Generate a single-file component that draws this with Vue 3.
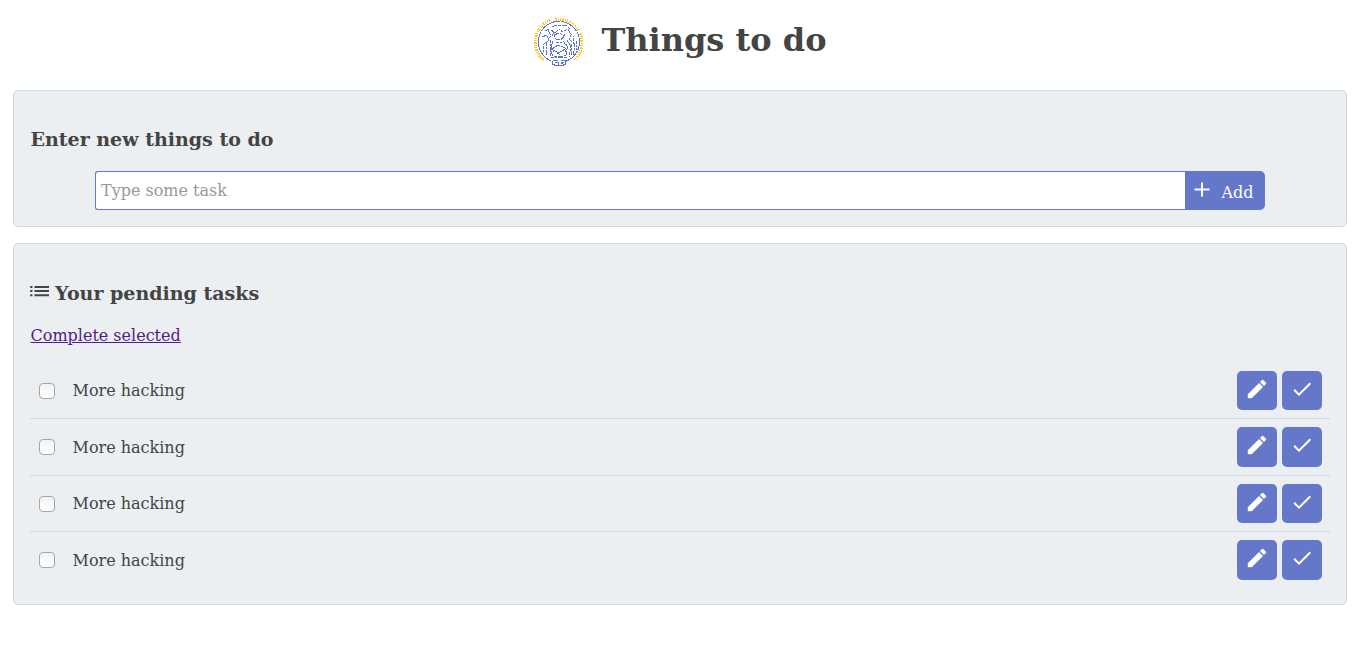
<script setup>
import { ref } from 'vue'

const draft = ref('')
const tasks = ref([
  { id: 1, title: 'More hacking', selected: false },
  { id: 2, title: 'More hacking', selected: false },
  { id: 3, title: 'More hacking', selected: false },
  { id: 4, title: 'More hacking', selected: false },
])

function add() {
  const title = draft.value.trim()
  if (!title) return
  tasks.value.push({ id: Date.now(), title, selected: false })
  draft.value = ''
}
function complete(id) {
  tasks.value = tasks.value.filter((t) => t.id !== id)
}
function completeSelected() {
  tasks.value = tasks.value.filter((t) => !t.selected)
}
</script>

<template>
  <div class="page">
    <header class="header">
      <svg class="logo" viewBox="0 0 50 50" aria-hidden="true" shape-rendering="crispEdges">
        <g fill="none" stroke="#fbc92c">
          <path d="M9.5 43A23.6 23.6 0 0 1 16 3.2" stroke-width="2.8" stroke-dasharray="1.3 1.1 .9 1 1.8 1" />
          <path d="M21.5 2.4A23 23 0 0 1 44.5 13.5" stroke-width="2.8" stroke-dasharray="1.4 1.1 .9 1 1.4 1.2" />
          <path d="M46 16.5A23.3 23.3 0 0 1 40.5 43" stroke-width="2.8" stroke-dasharray="1.4 1 1.6 1 1 1.1" />
        </g>
        <g fill="none" stroke="#5c74c8" stroke-width="1">
          <path d="M17.5 44.1A20.6 20.6 0 1 1 32.3 44.1" stroke-dasharray="6 .4 3 .4" />
          <path stroke-dasharray="3 .8 2 .7" d="M18 10l4-2 5 1 5-1 4 4M17 13l4 3 4-4 4 3 4-3M20 18l5-2 5 3-3 4-5-1zM14 13l3 6-4 5M34 12l3 6-2 4 5 5M8 20l5-2 2 6-5 3-1 8M12 26v12M16 23v17M19 24l-2 6 3 5M33 23l4 7-2 10M39 21l2 9-2 8M37 27v11M42 24v9M29 24l5 6-3 5M18 32l6-4 7 3 2 7-6 2-8-1-2-5zM20 33l6 5M23 37l8-5M22 25h7M17 40h16M20 15l-2 4M31 17l-2 4M11 14l4-2M36 16l4 4" />
          <path d="M18.5 43.5h5M26.5 43.5h5v4h-2v1h-9v-1h-2v-4M21 45.5h3v2M30 45.5h-3v1h2" />
        </g>
      </svg>
      <h1>Things to do</h1>
    </header>

    <section class="panel panel-new">
      <h3>Enter new things to do</h3>
      <form class="entry" @submit.prevent="add">
        <input v-model="draft" type="text" placeholder="Type some task" />
        <button class="btn btn-add" type="submit">
          <svg class="plus" viewBox="0 0 16 16"><path d="M8 .5v14M.5 7.5h15" fill="none" stroke="#fff" stroke-width="2" /></svg>
          <span>Add</span>
        </button>
      </form>
    </section>

    <section class="panel panel-list">
      <h3 class="list-title">
        <svg class="list-icon" viewBox="0 0 19 11">
          <path d="M.2 1h2.2M.2 5h2.2M.2 9.2h2.2M4.5 1h14.5M4.5 5h14.5M4.5 9.2h14.5" fill="none" stroke="#444" stroke-width="2" />
        </svg>
        <span>Your pending tasks</span>
      </h3>
      <a class="complete" href="#" @click.prevent="completeSelected">Complete selected</a>
      <ul class="tasks">
        <li v-for="t in tasks" :key="t.id" class="task">
          <input v-model="t.selected" class="check" type="checkbox" />
          <span class="title">{{ t.title }}</span>
          <button class="btn btn-icon" type="button" aria-label="Edit">
            <svg viewBox="0 0 24 24"><path fill="#fff" stroke="#fff" stroke-width=".4" d="M3 17.25V21h3.75L17.81 9.94l-3.75-3.75L3 17.25zM20.71 7.04a1 1 0 0 0 0-1.41l-2.34-2.34a1 1 0 0 0-1.41 0l-1.73 1.73 3.75 3.75 1.73-1.73z" /></svg>
          </button>
          <button class="btn btn-icon" type="button" aria-label="Complete" @click="complete(t.id)">
            <svg viewBox="0 0 24 24"><path fill="#fff" d="M9 16.17L4.83 12l-1.42 1.41L9 19 21 7l-1.41-1.41z" /></svg>
          </button>
        </li>
      </ul>
    </section>
  </div>
</template>

<style>
body {
  background: #fff;
}
</style>

<style scoped>
.page {
  box-sizing: border-box;
  padding: 17px 14px 0 13px;
  color: #444;
  font-family: "DejaVu Serif", serif;
  font-size: 16px;
  line-height: 19px;
}
.header {
  display: flex;
  justify-content: center;
  height: 73px;
}
.logo {
  width: 50px;
  height: 50px;
  margin: 0 17px 0 1px;
}
h1 {
  margin: 4px 0 0;
  font-size: 32px;
  line-height: 38px;
}
h3 {
  margin: 0;
  font-size: 19px;
  line-height: 22px;
}
.panel {
  box-sizing: border-box;
  padding: 37px 16px 0;
  border: 1px solid #cddae3;
  border-radius: 5px;
  background: #ebeff2;
}
.panel-new {
  height: 137px;
  margin-bottom: 16px;
}
.panel-new h3 {
  padding-left: 0.5px;
}
.panel-list {
  height: 362px;
  padding-top: 38px;
}
.entry {
  display: flex;
  width: 90%;
  height: 39px;
  margin: 21px auto 0;
}
.entry input {
  box-sizing: border-box;
  flex: 1;
  min-width: 0;
  padding: 0 5px;
  border: 1px solid #6577c9;
  border-right: 0;
  border-radius: 3px 0 0 3px;
  outline: 0;
  background: #fff;
  color: #444;
  font: inherit;
}
.entry input::placeholder {
  color: #999;
}
.btn {
  padding: 0;
  border: 0;
  background: #6577c9;
  color: #fff;
  font: inherit;
}
.btn-add {
  display: flex;
  width: 80px;
  padding: 0 0 0 8.5px;
  border-radius: 0 5px 5px 0;
}
.btn-add span {
  margin: 12px 0 0 12px;
}
.plus {
  width: 16px;
  height: 16px;
  margin-top: 10.5px;
}
.list-title {
  display: flex;
}
.list-icon {
  width: 19px;
  height: 11px;
  margin: 4px 6px 0 0;
}
.complete {
  display: block;
  width: max-content;
  margin-top: 22px;
  padding-left: 0.5px;
  color: #551a8b;
  text-decoration: underline;
}
.tasks {
  margin: 17.6px 0 0;
  padding: 0;
  list-style: none;
}
.task {
  box-sizing: border-box;
  display: flex;
  align-items: center;
  height: 56.5px;
  padding: 0 8px 0 9px;
  border-bottom: 1px solid #cddae3;
}
.task:last-child {
  border-bottom-color: transparent;
}
.check {
  box-sizing: border-box;
  appearance: none;
  width: 16px;
  height: 16px;
  margin: 1px 17.5px 0 0;
  border: 1px solid #a5a5a5;
  border-radius: 4px;
  background: linear-gradient(#f3f3f3, #fff);
}
.check:checked {
  background: #6577c9;
}
.title {
  flex: 1;
  margin-top: 0.6px;
}
.btn-icon {
  display: flex;
  justify-content: center;
  width: 40px;
  height: 39.5px;
  margin-left: 5px;
  border-radius: 5px;
}
.btn-icon svg {
  width: 24px;
  height: 24px;
  margin-top: 6px;
}
</style>
